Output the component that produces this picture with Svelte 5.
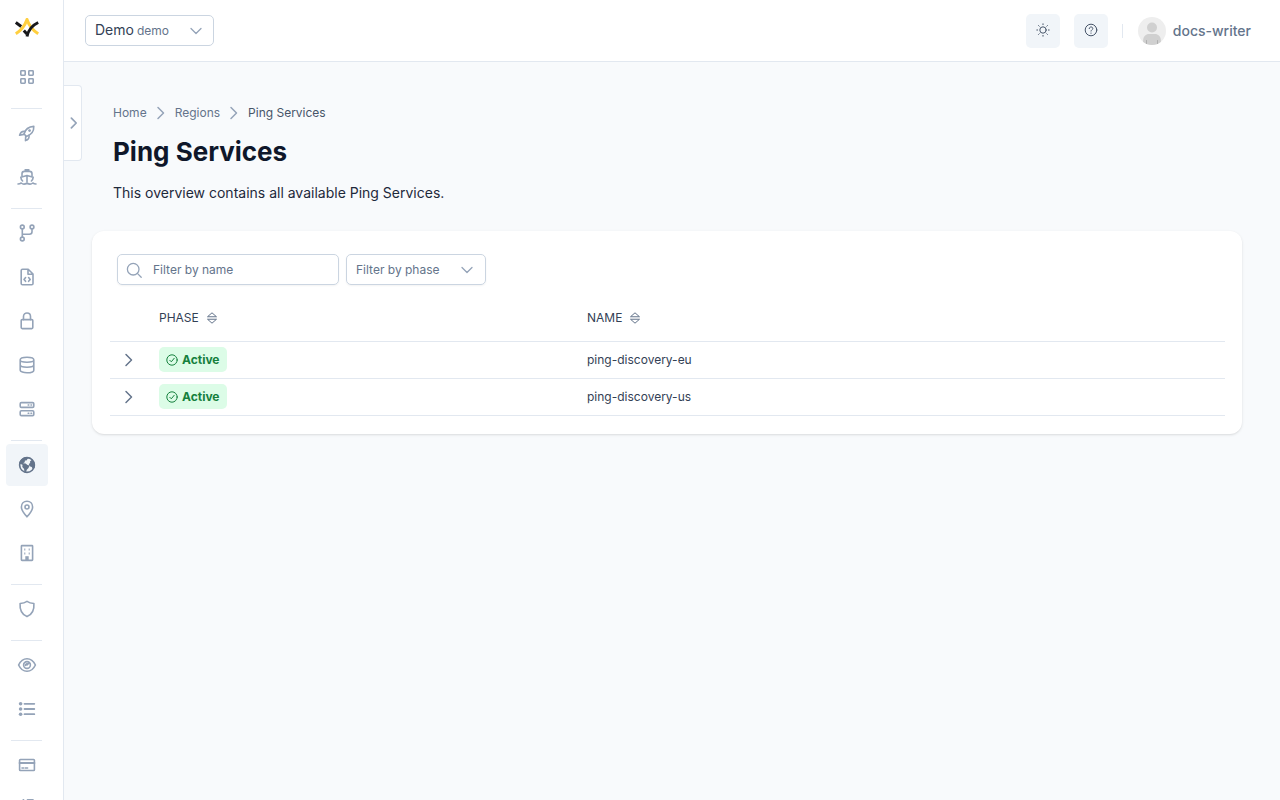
<script lang="ts">
  type Phase = 'Active' | 'Inactive';

  interface NavItem {
    label: string;
    icon: string;
    active?: boolean;
  }

  interface PingService {
    name: string;
    phase: Phase;
  }

  const navGroups: NavItem[][] = [
    [{ label: 'Dashboard', icon: 'grid' }],
    [
      { label: 'Projects', icon: 'rocket' },
      { label: 'Harbor', icon: 'ship' },
    ],
    [
      { label: 'Repositories', icon: 'branch' },
      { label: 'Definitions', icon: 'file' },
      { label: 'Credentials', icon: 'lock' },
      { label: 'Databases', icon: 'database' },
      { label: 'Servers', icon: 'server' },
    ],
    [
      { label: 'Regions', icon: 'globe', active: true },
      { label: 'Locations', icon: 'pin' },
      { label: 'Data centers', icon: 'building' },
    ],
    [{ label: 'Security', icon: 'shield' }],
    [
      { label: 'Monitoring', icon: 'eye' },
      { label: 'Events', icon: 'list' },
    ],
    [
      { label: 'Billing', icon: 'card' },
      { label: 'Settings', icon: 'sliders' },
    ],
  ];

  const services: PingService[] = [
    { name: 'ping-discovery-eu', phase: 'Active' },
    { name: 'ping-discovery-us', phase: 'Active' },
  ];

  let search = $state('');
  let phase = $state('');
  let sortKey = $state<keyof PingService>('name');
  let ascending = $state(true);

  const rows = $derived(
    services
      .filter((s) => s.name.includes(search) && (!phase || s.phase === phase))
      .sort((a, b) => a[sortKey].localeCompare(b[sortKey]) * (ascending ? 1 : -1))
  );

  function sortBy(key: keyof PingService) {
    ascending = sortKey === key ? !ascending : true;
    sortKey = key;
  }
</script>

{#snippet chevron()}
  <svg class="chevron" viewBox="0 0 16 16" aria-hidden="true"><path d="M5 2.5 10.5 8 5 13.5" /></svg>
{/snippet}

{#snippet caret()}
  <svg class="caret" viewBox="0 0 12 12" aria-hidden="true"><path d="m1 3.5 5 5 5-5" /></svg>
{/snippet}

{#snippet sortIcon()}
  <svg class="sort-icon" viewBox="0 0 10 12" aria-hidden="true">
    <path d="M.8 4.500 5 .8l4.200 3.700z" />
    <path d="M.8 7.500 5 11.200l4.200-3.700z" />
  </svg>
{/snippet}

{#snippet navIcon(name: string)}
  <svg class="nav-icon" viewBox="0 0 20 20" aria-hidden="true">
    {#if name === 'grid'}
      <rect x="3.8" y="3.8" width="4.400" height="4.400" rx="0.6" />
      <rect x="11.8" y="3.8" width="4.400" height="4.400" rx="0.6" />
      <rect x="3.8" y="11.8" width="4.400" height="4.400" rx="0.6" />
      <rect x="11.8" y="11.8" width="4.400" height="4.400" rx="0.6" />
    {:else if name === 'rocket'}
      <path d="M7 11c1.200-4.400 4.300-7.400 9.800-7.600.2 5-2.600 8.400-7.300 10z" />
      <path d="M8 8.400C5.300 8 3.500 9.300 2.600 12.200l4.300-.8M12 12.300c.5 2.600-.8 4.300-3.500 5.300l.2-4.400" />
      <circle class="dot" cx="12.600" cy="7.600" r="1.400" />
    {:else if name === 'ship'}
      <path d="M8.300 3h3.400" stroke-width="2" />
      <path d="M5 9V6.800c0-1.500.8-2.400 2.300-2.400h5.400c1.500 0 2.300.9 2.300 2.400V9" />
      <path d="M5.600 14c-1.200-1.100-1.700-2.300-1.800-3.700L10 8.600l6.200 1.700c-.1 1.400-.6 2.600-1.800 3.700M10 8.800v6" />
      <path d="M1 17c1.600 0 2.200-.3 3.200-1 1.500 1.300 4 1.300 5.800 0 1.800 1.300 4.300 1.300 5.800 0 1 .7 1.600 1 3.200 1" />
    {:else if name === 'branch'}
      <circle cx="5.300" cy="4" r="1.900" />
      <circle cx="5.300" cy="16" r="1.900" />
      <circle cx="15" cy="4" r="1.900" />
      <path d="M5.300 6v8M5.300 11.200h7c1.800 0 2.700-.8 2.700-2.500V6" />
    {:else if name === 'file'}
      <path d="M4.200 3.500c0-.8.5-1.300 1.300-1.300h5.700L16 7v9.500c0 .8-.5 1.300-1.300 1.300H5.500c-.8 0-1.300-.5-1.300-1.300zM11 2.500v4.700h4.700" />
      <path d="M8.600 10.500 7 12.400l1.600 1.900M11.600 10.500l1.600 1.900-1.600 1.900" />
    {:else if name === 'lock'}
      <rect x="4.200" y="8.600" width="11.600" height="9" rx="1" />
      <path d="M6.500 8.600V5.400c0-4.600 7-4.600 7 0v3.200" />
    {:else if name === 'database'}
      <path d="M3.200 4.800c0-3.400 13.600-3.400 13.600 0v10.400c0 3.400-13.600 3.400-13.600 0zM3.200 5c0 3 13.600 3 13.600 0M3.200 9.800c0 3.200 13.600 3.200 13.600 0" />
    {:else if name === 'server'}
      <rect x="3.200" y="3.600" width="13.600" height="4.800" rx="1.200" />
      <rect x="3.200" y="11.800" width="13.600" height="4.800" rx="1.200" />
      <path d="M11.200 6h.6M14 6h.6M11.200 14.200h.6M14 14.200h.6" />
    {:else if name === 'globe'}
      <circle cx="10" cy="10" r="7.400" />
      <path
        class="solid"
        d="M2 8.400c.8-3 2.800-5.300 6-6.200 1.500-.3 3-.3 4 0L10.500 4l-1 1.400-1.600.2-.2 1.700-1.700.9 2.600.3 1.900 1.400 2 .7-1 2.500-1.700 1.600-1 3.300-1.400-.3-.3-3.700-1.800-2L5.500 9.800z"
      />
      <path class="solid" d="m13 6.500 2.200-2 2 2.500.8 3-.4 2.700-1.800 1.800-1-2.500-2.200-.8-.8-2.300 1.400-1z" />
    {:else if name === 'pin'}
      <path d="M10 17.800c-3.700-4-5.600-6.800-5.600-9.800 0-3.500 2.400-5.800 5.600-5.800s5.600 2.300 5.600 5.800c0 3-1.900 5.800-5.600 9.800z" />
      <circle cx="10" cy="8" r="2" />
    {:else if name === 'building'}
      <rect x="4.400" y="2.600" width="11.200" height="14.800" rx="0.6" />
      <path d="M7.300 6.400h1M11.700 6.400h1M7.300 10.400h1M11.700 10.400h1" stroke-linecap="butt" stroke-width="2" />
      <path class="solid" d="M8.300 13.200h3.400v4.500H8.300z" />
    {:else if name === 'shield'}
      <path d="M10 2.400c2 1.400 4.300 2 6.900 2.100.5 6.400-1.500 10.900-6.900 13.100C4.600 15.400 2.600 10.900 3.100 4.500 5.700 4.400 8 3.800 10 2.400z" />
    {:else if name === 'eye'}
      <path d="M1.600 10C3.700 5.500 6.600 3.700 10 3.700s6.300 1.800 8.400 6.300c-2.100 4.500-5 6.300-8.400 6.300S3.700 14.500 1.600 10z" />
      <circle cx="10" cy="10" r="3.400" />
      <path d="M10 10l2.300-2.300M8.500 10.500V9.700L10 8.500" />
    {:else if name === 'list'}
      <path d="M7.500 4.800h9.800M7.500 10h9.800M7.500 15.200h9.800" stroke-width="1.800" />
      <circle class="dot" cx="3.600" cy="4.800" r="1.800" />
      <circle class="dot" cx="3.600" cy="10" r="1.800" />
      <circle class="dot" cx="3.600" cy="15.200" r="1.800" />
    {:else if name === 'card'}
      <rect x="2.600" y="4.500" width="14.800" height="11" rx="0.8" />
      <path d="M2.600 8h14.800" stroke-width="2" />
      <path d="M5 13h1.600M8.300 13h2.300" />
    {:else if name === 'sliders'}
      <path d="M6.500.8 4.500 2.500V18M10.500.8H16M10.500 8h5M10.500 14h4" />
    {/if}
  </svg>
{/snippet}

<div class="shell">
  <aside class="sidebar">
    <a class="logo" href="#home" aria-label="Home">
      <svg viewBox="0 0 24 20" aria-hidden="true">
        <path class="logo-yellow" d="M.8 15.800C6 12.500 9.800 8 12 1.500c2.200 6.500 6 11 11.200 14.300" />
        <path class="logo-black" d="M.8 4.500 6.200 8.500M23.200 4.500C17.500 7.200 13.500 11 12 18.500" />
        <path class="logo-black" d="m8.800 12.500 3.200 3.500" />
      </svg>
    </a>
    <nav aria-label="Main">
      {#each navGroups as group}
        <ul class="nav-group">
          {#each group as item}
            <li>
              <a
                class="nav-link"
                class:nav-link--active={item.active}
                href="#{item.icon}"
                aria-label={item.label}
                aria-current={item.active ? 'page' : undefined}
              >
                {@render navIcon(item.icon)}
              </a>
            </li>
          {/each}
        </ul>
      {/each}
    </nav>
  </aside>

  <div class="content">
    <header class="topbar">
      <button class="project-select" type="button">
        <span class="project-name">Demo <small>demo</small></span>
        {@render caret()}
      </button>
      <div class="actions">
        <button class="icon-button" type="button" aria-label="Toggle theme">
          <svg viewBox="0 0 14 14" aria-hidden="true">
            <circle cx="7" cy="7" r="3.200" />
            <path d="M7 .8v.8M7 12.400v.8M.8 7h.8M12.400 7h.8M2.600 2.600l.6.6M10.800 10.800l.6.6M2.600 11.400l.6-.6M10.800 3.200l.6-.6" />
          </svg>
        </button>
        <button class="icon-button" type="button" aria-label="Help">
          <svg viewBox="0 0 14 14" aria-hidden="true">
            <circle cx="7" cy="7" r="5.800" />
            <path d="M5.200 5.600c0-2.300 3.600-2.300 3.600 0 0 1.200-1.800 1.200-1.800 2.500M7 10v.3" />
          </svg>
        </button>
        <span class="separator"></span>
        <a class="user" href="#profile">
          <svg class="avatar" viewBox="0 0 28 28" aria-hidden="true">
            <circle cx="14" cy="14" r="14" fill="#eeeeee" />
            <circle cx="14" cy="10.500" r="5" fill="#d0d0d0" />
            <path d="M5 24.700C5 19 8 17 11 17h6c3 0 6 2 6 7.700-5 4.400-13 4.400-18 0z" fill="#d0d0d0" />
            <path d="M8.500 23.500v3M19.500 23.500v3" stroke="#b0b0b0" />
          </svg>
          docs-writer
        </a>
      </div>
    </header>

    <div class="body">
      <button class="drawer-toggle" type="button" aria-label="Expand navigation">
        {@render chevron()}
      </button>

      <main>
        <div class="page-head">
          <nav class="breadcrumbs" aria-label="Breadcrumb">
            <a href="#home">Home</a>
            {@render chevron()}
            <a href="#regions">Regions</a>
            {@render chevron()}
            <span aria-current="page">Ping Services</span>
          </nav>
          <h1>Ping Services</h1>
          <p>This overview contains all available Ping Services.</p>
        </div>

        <section class="card">
          <div class="filters">
            <label class="search">
              <svg viewBox="0 0 16 16" aria-hidden="true"><circle cx="7.200" cy="7.200" r="5.800" /><path d="m11.600 11.600 3.600 3.600" /></svg>
              <input type="text" placeholder="Filter by name" aria-label="Filter by name" bind:value={search} />
            </label>
            <div class="phase-filter">
              <select aria-label="Filter by phase" bind:value={phase}>
                <option value="">Filter by phase</option>
                <option value="Active">Active</option>
                <option value="Inactive">Inactive</option>
              </select>
              {@render caret()}
            </div>
          </div>

          <table>
            <thead>
              <tr>
                <th class="expand-cell"></th>
                <th class="phase-cell">
                  <button class="sort" type="button" onclick={() => sortBy('phase')}>PHASE {@render sortIcon()}</button>
                </th>
                <th>
                  <button class="sort" type="button" onclick={() => sortBy('name')}>NAME {@render sortIcon()}</button>
                </th>
              </tr>
            </thead>
            <tbody>
              {#each rows as service (service.name)}
                <tr>
                  <td class="expand-cell">
                    <button class="expand" type="button" aria-label="Expand {service.name}">{@render chevron()}</button>
                  </td>
                  <td>
                    <span class="badge">
                      <svg viewBox="0 0 12 12" aria-hidden="true">
                        <circle cx="6" cy="6" r="5.200" />
                        <path d="m3.800 6.300 1.500 1.500 2.900-3.500" />
                      </svg>
                      {service.phase}
                    </span>
                  </td>
                  <td>{service.name}</td>
                </tr>
              {/each}
            </tbody>
          </table>
        </section>
      </main>
    </div>
  </div>
</div>

<style>
  :global(body) {
    background: #f8fafc;
  }

  .shell {
    --border: #e2e8f0;
    --input-border: #cbd5e1;
    --muted: #94a3b8;
    --text-soft: #64748b;
    --text: #334155;

    display: flex;
    height: 100vh;
    overflow: hidden;
    background: #f8fafc;
    color: var(--text);
    font-family: Inter, sans-serif;
    font-size: 12px;
    line-height: 18px;
  }

  .shell :global(*) {
    box-sizing: border-box;
  }

  button,
  input,
  select {
    margin: 0;
    padding: 0;
    border: 0;
    background: none;
    color: inherit;
    font: inherit;
    cursor: pointer;
  }

  a {
    color: inherit;
    text-decoration: none;
  }

  svg {
    flex-shrink: 0;
    fill: none;
    stroke: currentColor;
    stroke-linecap: round;
    stroke-linejoin: round;
  }

  /* Sidebar */
  .sidebar {
    flex: none;
    width: 64px;
    overflow: hidden;
    border-right: 1px solid var(--border);
    background: #fff;
  }

  .logo {
    display: flex;
    width: 54px;
    height: 56px;
    align-items: center;
    justify-content: center;
  }

  .logo svg {
    width: 24px;
    height: 20px;
    stroke-width: 3;
    stroke-linecap: butt;
  }

  .logo-yellow {
    stroke: #ffcf3f;
  }

  .logo-black {
    stroke: #18181b;
  }

  .nav-group {
    display: flex;
    flex-direction: column;
    gap: 2px;
    margin: 0;
    padding: 0 6px;
    list-style: none;
  }

  .nav-group + .nav-group::before {
    content: "";
    width: 31px;
    height: 1px;
    margin: 10px 5px 1px;
    background: var(--border);
  }

  .nav-link {
    display: flex;
    width: 42px;
    height: 42px;
    align-items: center;
    justify-content: center;
    border-radius: 4px;
    color: var(--muted);
  }

  .nav-link--active {
    background: #f1f5f9;
    color: var(--text-soft);
  }

  .nav-icon {
    width: 20px;
    height: 20px;
    stroke-width: 1.6;
  }

  .nav-icon .solid,
  .nav-icon .dot {
    fill: currentColor;
    stroke: none;
  }

  /* Top bar */
  .content {
    display: flex;
    flex: 1;
    flex-direction: column;
    min-width: 0;
  }

  .topbar {
    display: flex;
    align-items: center;
    justify-content: space-between;
    height: 62px;
    padding: 0 29px 0 21px;
    border-bottom: 1px solid var(--border);
    background: #fff;
  }

  .project-select {
    display: flex;
    align-items: center;
    justify-content: space-between;
    width: 129px;
    height: 31px;
    padding: 0 11px 0 9px;
    border: 1px solid var(--input-border);
    border-radius: 5px;
    font-size: 14px;
  }

  .project-name small {
    margin-left: -1px;
    color: var(--text-soft);
    font-size: 12px;
  }

  .caret {
    width: 12px;
    height: 12px;
    color: var(--muted);
    stroke-width: 1.3;
  }

  .actions {
    display: flex;
    align-items: center;
    gap: 14px;
  }

  .icon-button {
    display: flex;
    width: 34px;
    height: 34px;
    align-items: center;
    justify-content: center;
    padding-bottom: 2px;
    border-radius: 5px;
    background: #f1f5f9;
    color: #475569;
  }

  .icon-button svg {
    width: 14px;
    height: 14px;
  }

  .separator {
    width: 1px;
    height: 14px;
    margin-right: 1px;
    background: var(--border);
  }

  .user {
    display: flex;
    align-items: center;
    gap: 7px;
    color: var(--text-soft);
    font-size: 14px;
    font-weight: 500;
  }

  .avatar {
    width: 28px;
    height: 28px;
    stroke: none;
  }

  /* Page */
  .body {
    display: flex;
    flex: 1;
    align-items: flex-start;
    min-height: 0;
    overflow: auto;
  }

  .drawer-toggle {
    display: flex;
    flex: none;
    width: 18px;
    height: 76px;
    align-items: center;
    justify-content: flex-end;
    margin-top: 23px;
    border: 1px solid var(--border);
    border-left: 0;
    border-radius: 0 4px 4px 0;
    background: #fff;
    color: var(--muted);
  }

  .chevron {
    width: 16px;
    height: 16px;
    stroke-width: 1.5;
  }

  .drawer-toggle .chevron {
    width: 14px;
    height: 14px;
    stroke-width: 2;
  }

  main {
    flex: 1;
    min-width: 0;
    padding: 42px 38px 28px 10px;
  }

  .page-head {
    padding: 0 21px;
  }

  .breadcrumbs {
    display: flex;
    align-items: center;
    gap: 6px;
    color: var(--text-soft);
  }

  .breadcrumbs .chevron {
    color: var(--muted);
  }

  .breadcrumbs span {
    color: #475569;
  }

  h1 {
    margin: 14px 0 15px;
    color: #0f172a;
    font-size: 26px;
    font-weight: 700;
    line-height: 32px;
  }

  p {
    margin: 0;
    color: #1e293b;
    font-size: 14px;
    line-height: 20px;
  }

  .card {
    margin-top: 28px;
    padding: 23px 17px 18px 18px;
    border-radius: 12px;
    background: #fff;
    box-shadow: 0 1px 3px rgb(0 0 0 / 0.1), 0 1px 2px -1px rgb(0 0 0 / 0.1);
  }

  .filters {
    display: flex;
    gap: 7px;
    padding: 0 7px;
  }

  .search,
  .phase-filter {
    display: flex;
    align-items: center;
    height: 31px;
    border: 1px solid var(--input-border);
    border-radius: 5px;
    box-shadow: 0 1px 2px rgb(0 0 0 / 0.05);
    color: var(--text-soft);
  }

  .search {
    gap: 11px;
    width: 222px;
    padding: 0 8px;
  }

  .search svg {
    width: 16px;
    height: 16px;
    color: var(--muted);
    stroke-width: 1.3;
  }

  .search input {
    flex: 1;
    min-width: 0;
    outline: 0;
    cursor: text;
  }

  .search input::placeholder {
    color: var(--text-soft);
    opacity: 1;
  }

  .phase-filter {
    display: grid;
    width: 140px;
  }

  .phase-filter select,
  .phase-filter :global(.caret) {
    grid-area: 1 / 1;
  }

  .phase-filter select {
    height: 29px;
    padding: 0 32px 0 9px;
    appearance: none;
  }

  .phase-filter :global(.caret) {
    justify-self: end;
    margin-right: 12px;
    pointer-events: none;
  }

  table {
    width: 100%;
    margin-top: 7px;
    border-collapse: collapse;
    table-layout: fixed;
  }

  th,
  td {
    height: 37px;
    padding: 0 7px;
    border-bottom: 1px solid var(--border);
    text-align: left;
    font-weight: 400;
  }

  th {
    height: 49px;
    padding-top: 4px;
  }

  .expand-cell {
    width: 42px;
    padding: 0;
  }

  .phase-cell {
    width: 428px;
  }

  .sort {
    display: flex;
    align-items: center;
    gap: 8px;
  }

  .sort-icon {
    width: 10px;
    height: 12px;
    color: var(--text-soft);
  }

  .expand {
    display: flex;
    width: 37px;
    height: 30px;
    align-items: center;
    justify-content: center;
    color: var(--text-soft);
  }

  .badge {
    display: inline-flex;
    align-items: center;
    gap: 4px;
    height: 25px;
    padding: 0 7px;
    border-radius: 5px;
    background: #dcfce7;
    color: #15803d;
    font-weight: 700;
    vertical-align: middle;
  }

  .badge svg {
    width: 12px;
    height: 12px;
  }
</style>
